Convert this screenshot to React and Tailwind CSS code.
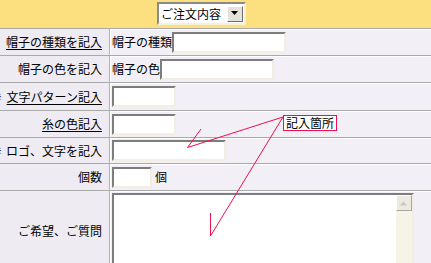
import React from "react";

const inputCls =
  "bg-white h-[21px] border-2 border-t-[#7d7d7d] border-l-[#7d7d7d] border-b-[#f2efe2] border-r-[#f2efe2]";

function Row({ h, label, underline, mark, children }) {
  return (
    <div
      className={`flex border-t border-[#a9a9a9] shadow-[inset_0_1px_0_#ffffff] ${h}`}
    >
      <div className="w-[110px] flex-none flex items-center justify-end pr-[7px] border-r border-[#b3b3b3] shadow-[1px_0_0_#ffffff] bg-[#eeebf2] relative overflow-hidden">
        {mark && (
          <span className="absolute left-[-6px] top-1/2 -translate-y-1/2 text-[8px] leading-none text-black">
            ※
          </span>
        )}
        <span className={underline ? "underline underline-offset-2" : ""}>{label}</span>
      </div>
      <div className="flex-1 flex items-center pl-[2px]">{children}</div>
    </div>
  );
}

export default function App() {
  return (
    <div
      className="relative w-[431px] h-[263px] overflow-hidden bg-[#f3eff7] text-[12px] leading-none text-black"
      style={{ fontFamily: '"Noto Sans CJK JP", "Noto Sans", sans-serif' }}
    >
      <div className="h-[28px] bg-[#fcdf7f] flex pt-[2px] pl-[157px]">
        <div className="w-[89px] h-[23px] bg-white border-2 border-t-[#8a8a8a] border-l-[#8a8a8a] border-b-[#f7f0d8] border-r-[#f7f0d8] flex items-center pl-[2px] gap-[2px]">
          <span>ご注文内容</span>
          <div className="ml-auto mr-[1px] w-[16px] h-[16px] bg-[#e4e2da] border border-t-white border-l-white border-b-[#6e6e6e] border-r-[#6e6e6e] flex items-center justify-center">
            <svg width="8" height="5" viewBox="0 0 8 5">
              <polygon points="0,0 7,0 3.5,4" fill="#000" />
            </svg>
          </div>
        </div>
      </div>

      <Row h="h-[27px]" label="帽子の種類を記入" underline>
        <span>帽子の種類</span>
        <div className={`${inputCls} w-[114px]`} />
      </Row>
      <Row h="h-[27px]" label="帽子の色を記入">
        <span>帽子の色</span>
        <div className={`${inputCls} w-[114px]`} />
      </Row>
      <Row h="h-[28px]" label="文字パターン記入" underline mark>
        <div className={`${inputCls} w-[64px]`} />
      </Row>
      <Row h="h-[27px]" label="糸の色記入" underline>
        <div className={`${inputCls} w-[64px]`} />
      </Row>
      <Row h="h-[26px]" label="ロゴ、文字を記入" mark>
        <div className={`${inputCls} w-[114px] h-[20px]`} />
      </Row>
      <Row h="h-[27px]" label="個数">
        <div className={`${inputCls} w-[40px]`} />
        <span className="ml-[3px]">個</span>
      </Row>
      <div className="flex border-t border-[#a9a9a9] shadow-[inset_0_1px_0_#ffffff] h-[80px]">
        <div className="w-[110px] flex-none flex items-start justify-end pr-[7px] pt-[34px] border-r border-[#b3b3b3] shadow-[1px_0_0_#ffffff] bg-[#eeebf2]">
          <span>ご希望、ご質問</span>
        </div>
        <div className="flex-1 pl-[2px] pt-[2px]">
          <div className="w-[302px] h-[80px] bg-white border-2 border-t-[#7d7d7d] border-l-[#7d7d7d] border-b-[#f2efe2] border-r-[#f2efe2] flex justify-end">
            <div className="w-[16px] bg-[#f6f4e6] flex flex-col">
              <div className="h-[16px] bg-[#eceade] border border-t-white border-l-white border-b-[#a8a8a0] border-r-[#a8a8a0] flex items-center justify-center">
                <svg width="8" height="5" viewBox="0 0 8 5">
                  <polygon points="0,4.5 7,4.5 3.5,0.5" fill="#c8c8c0" />
                </svg>
              </div>
            </div>
          </div>
        </div>
      </div>

      <div className="absolute left-[283px] top-[115px] h-[16px] px-[2px] bg-white border border-[#ee1050] flex items-center">
        記入箇所
      </div>

      <svg
        className="absolute inset-0 pointer-events-none"
        width="431"
        height="263"
        viewBox="0 0 431 263"
      >
        <g stroke="#f0104a" strokeWidth="1" fill="none">
          <line x1="283" y1="117" x2="187.5" y2="147.5" />
          <line x1="187.5" y1="147.5" x2="201" y2="129" />
          <line x1="283" y1="117" x2="210.5" y2="236" />
          <line x1="210.5" y1="213" x2="210.5" y2="236" />
        </g>
      </svg>
    </div>
  );
}
